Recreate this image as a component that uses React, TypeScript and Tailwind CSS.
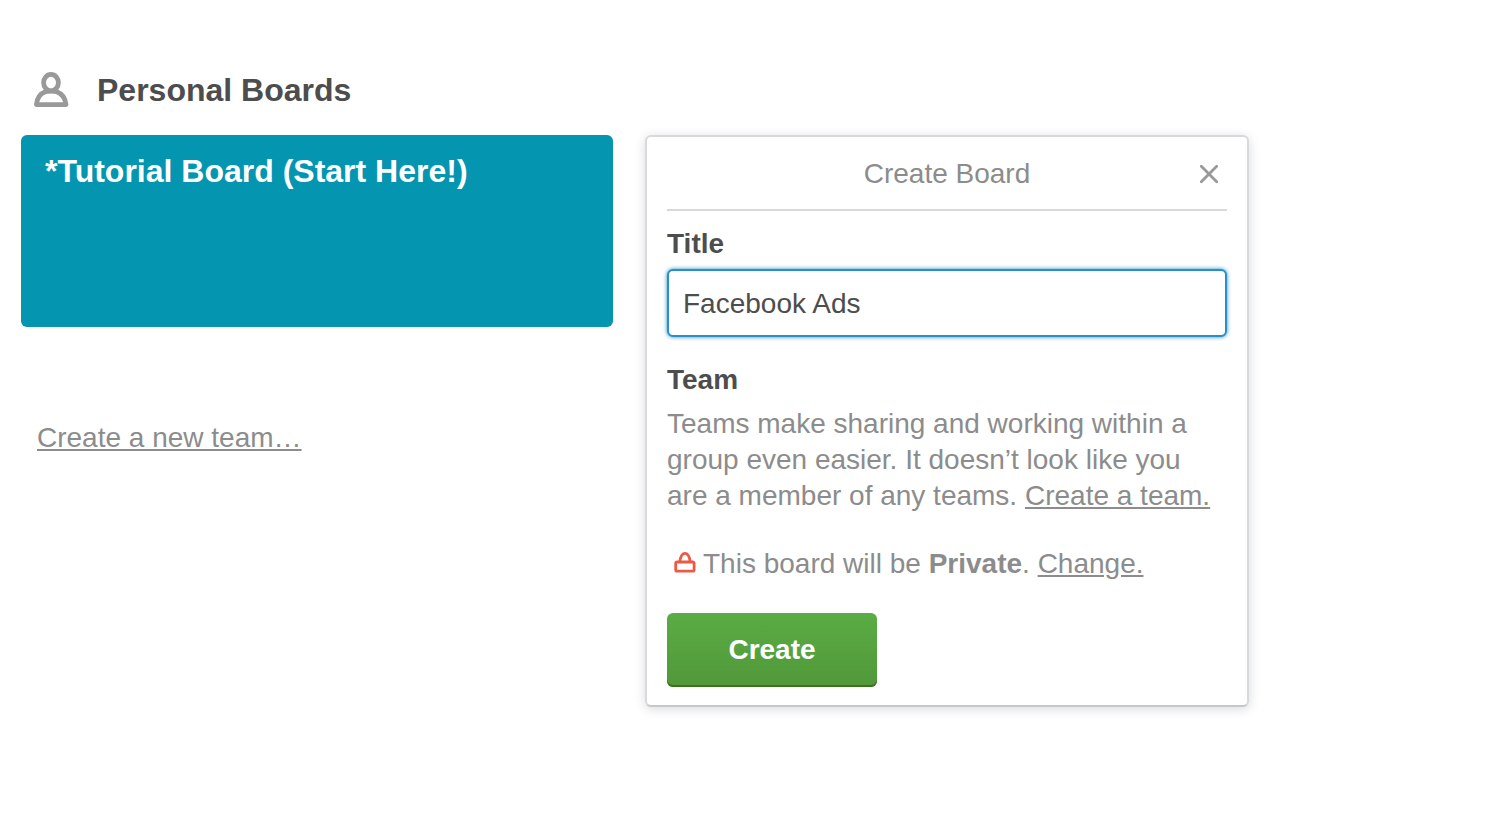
import { useState } from 'react';

const MemberIcon: React.FC = () => (
  <svg
    className="h-9 w-9 text-[#999999]"
    viewBox="0 0 36 36"
    fill="none"
    stroke="currentColor"
    strokeWidth="4.8"
    strokeLinejoin="round"
    aria-hidden="true"
  >
    <ellipse cx="17" cy="10.6" rx="7.4" ry="8.2" />
    <path d="M2.400 32.600C3.200 25.500 6.500 21.600 11.200 19.800C13.500 18.900 20.500 18.900 22.800 19.800C27.500 21.600 31.200 25.500 32 32.600Z" />
  </svg>
);

const LockIcon: React.FC = () => (
  <svg
    className="h-6 w-6 shrink-0 text-[#eb5a46]"
    viewBox="0 0 24 24"
    fill="none"
    stroke="currentColor"
    strokeWidth="2.8"
    aria-hidden="true"
  >
    <rect x="2.700" y="10" width="18.400" height="9.200" rx="1.500" />
    <path d="M6.800 10C7.500 4.500 8.800 1.400 12 1.400S16.500 4.500 17.200 10" />
  </svg>
);

const CloseIcon: React.FC = () => (
  <svg
    className="h-5 w-5"
    viewBox="0 0 20 20"
    fill="none"
    stroke="currentColor"
    strokeWidth="2.8"
    strokeLinecap="round"
    aria-hidden="true"
  >
    <path d="M2.300 2.300L17.700 17.700M17.700 2.300L2.300 17.700" />
  </svg>
);

const CreateBoard: React.FC<{ onClose: () => void }> = ({ onClose }) => {
  const [title, setTitle] = useState('Facebook Ads');

  return (
    <form
      onSubmit={(e) => e.preventDefault()}
      className="w-full max-w-[604px] rounded-md border-2 border-[#d6dadc] border-b-[#c4c9cc] bg-white px-5 pb-[18px] text-[28px] leading-9 text-[#8c8c8c] shadow-[0_2px_12px_rgba(0,0,0,0.15)]"
    >
      <div className="grid grid-cols-[36px_1fr_36px] items-center border-b-2 border-[#d6dadc] pt-[19px] pb-[17px]">
        <h2 className="col-start-2 text-center">Create Board</h2>
        <button
          type="button"
          aria-label="Close"
          onClick={onClose}
          className="flex h-9 w-9 items-center justify-center text-[#999999]"
        >
          <CloseIcon />
        </button>
      </div>
      <label htmlFor="title" className="mt-[15px] block font-bold text-[#4d4d4d]">
        Title
      </label>
      <input
        id="title"
        type="text"
        value={title}
        onChange={(e) => setTitle(e.target.value)}
        className="mt-[7px] block w-full rounded-md border-2 border-[#298fca] bg-white px-[14px] pt-[15px] pb-[13px] text-[#4d4d4d] shadow-[0_0_4px_#298fca] outline-none"
      />
      <h3 className="mt-[25px] font-bold text-[#4d4d4d]">Team</h3>
      <p className="mt-2">
        Teams make sharing and working within a group even easier. It doesn’t
        look like you are a member of any teams.{' '}
        <a href="#" className="underline">
          Create a team.
        </a>
      </p>
      <div className="mt-8 flex items-center pl-[6px]">
        <LockIcon />
        <p className="ml-[6px]">
          This board will be <strong>Private</strong>.{' '}
          <a href="#" className="underline">
            Change.
          </a>
        </p>
      </div>
      <button
        type="submit"
        className="mt-[31px] min-w-[210px] rounded-md bg-linear-to-b from-[#5aac44] to-[#519839] px-8 py-[19px] font-bold text-white shadow-[inset_0_-2px_0_#3f6f21]"
      >
        Create
      </button>
    </form>
  );
};

const App: React.FC = () => {
  const [creating, setCreating] = useState(true);

  return (
    <main className="min-h-screen bg-white px-[21px] pt-[70px] font-['Helvetica_Neue','Liberation_Sans',Arial,sans-serif]">
      <div className="flex items-center pl-[13px]">
        <MemberIcon />
        <h1 className="ml-[27px] text-[32px] leading-10 font-bold text-[#4d4d4d]">
          Personal Boards
        </h1>
      </div>
      <div className="mt-[25px] flex items-start gap-8">
        <div className="w-full max-w-[592px]">
          <a
            href="#"
            className="block h-48 rounded-md bg-[#0495b0] px-6 py-4 text-[32px] leading-10 font-bold text-white"
          >
            *Tutorial Board (Start Here!)
          </a>
          <a
            href="#"
            className="mt-[93px] ml-4 inline-block text-[28px] leading-9 text-[#8c8c8c] underline"
          >
            Create a new team…
          </a>
        </div>
        {creating && <CreateBoard onClose={() => setCreating(false)} />}
      </div>
    </main>
  );
};

export default App;
